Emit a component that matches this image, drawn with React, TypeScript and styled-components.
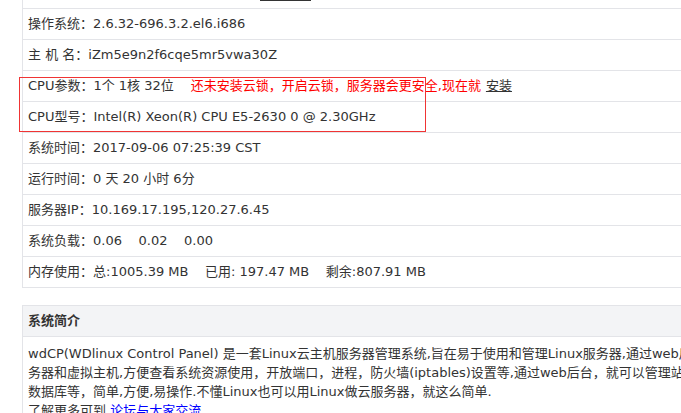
import styled, { createGlobalStyle } from 'styled-components'

const GlobalStyle = createGlobalStyle`
  html, body {
    margin: 0;
    padding: 0;
    background: #fff;
    overflow: hidden;
  }
  body {
    font-family: "DejaVu Sans", "Noto Sans CJK SC", sans-serif;
    font-size: 13px;
    color: #333;
  }
`

const Page = styled.div`
  width: 760px;
  padding-left: 22px;
`

const Panel = styled.div<{ $top?: boolean }>`
  border-left: 1px solid #e3e4e8;
  border-top: ${(props) => (props.$top ? '1px solid #e3e4e8' : 'none')};
`

// the row above is scrolled out of view, only its link underline shows
const CutRow = styled.div`
  height: 8px;
  border-bottom: 1px solid #e3e4e8;
`

const CutUnderline = styled.div`
  width: 51px;
  margin-left: 237px;
  border-top: 1px solid #333;
`

const Row = styled.div`
  height: 30px;
  line-height: 30px;
  padding-left: 5px;
  border-bottom: 1px solid #e3e4e8;
  white-space: pre;
  overflow: hidden;
`

const Highlight = styled.div`
  position: relative;
`

const RedBox = styled.div`
  position: absolute;
  left: -4px;
  top: 6px;
  width: 405px;
  height: 53px;
  border: 1px solid #f03434;
  pointer-events: none;
`

const Warn = styled.span`
  color: #f00;
  margin-left: 17px;
`

const InstallLink = styled.a`
  color: #333;
  text-decoration: underline;
  margin-left: 5px;
`

const PanelHeader = styled.div`
  height: 30px;
  line-height: 30px;
  padding-left: 5px;
  background: #f3f4f6;
  border-bottom: 1px solid #e3e4e8;
  font-weight: bold;
`

const Intro = styled.div`
  padding: 7px 5px 0;
  line-height: 19px;
`

const Line = styled.div`
  white-space: nowrap;
  overflow: hidden;
`

const BlueLink = styled.a`
  color: #00f;
  text-decoration: none;
`

const Gap = styled.div`
  height: 17px;
`

const sysInfo = [
  ['系统时间', '2017-09-06 07:25:39 CST'],
  ['运行时间', '0 天 20 小时 6分'],
  ['服务器IP', '10.169.17.195,120.27.6.45'],
  ['系统负载', '0.06    0.02    0.00'],
  ['内存使用', '总:1005.39 MB    已用: 197.47 MB    剩余:807.91 MB'],
]

export default function App() {
  return (
    <Page>
      <GlobalStyle />
      <Panel>
        <CutRow>
          <CutUnderline />
        </CutRow>
        <Row>操作系统：2.6.32-696.3.2.el6.i686</Row>
        <Row>主 机 名：iZm5e9n2f6cqe5mr5vwa30Z</Row>
        <Highlight>
          <Row>
            CPU参数：1个 1核 32位
            <Warn>还未安装云锁，开启云锁，服务器会更安全,现在就</Warn>
            <InstallLink href="#">安装</InstallLink>
          </Row>
          <Row>CPU型号：Intel(R) Xeon(R) CPU E5-2630 0 @ 2.30GHz</Row>
          <RedBox />
        </Highlight>
        {sysInfo.map(([label, value]) => (
          <Row key={label}>
            {label}：{value}
          </Row>
        ))}
      </Panel>
      <Gap />
      <Panel $top>
        <PanelHeader>系统简介</PanelHeader>
        <Intro>
          <Line>
            wdCP(WDlinux Control Panel) 是一套Linux云主机服务器管理系统,旨在易于使用和管理Linux服务器,通过web后台管理服
          </Line>
          <Line>
            务器和虚拟主机,方便查看系统资源使用，开放端口，进程，防火墙(iptables)设置等,通过web后台，就可以管理站点，FTP，
          </Line>
          <Line>数据库等，简单,方便,易操作.不懂Linux也可以用Linux做云服务器，就这么简单.</Line>
          <Line>
            了解更多可到 <BlueLink href="#">论坛与大家交流</BlueLink>
          </Line>
        </Intro>
      </Panel>
    </Page>
  )
}
